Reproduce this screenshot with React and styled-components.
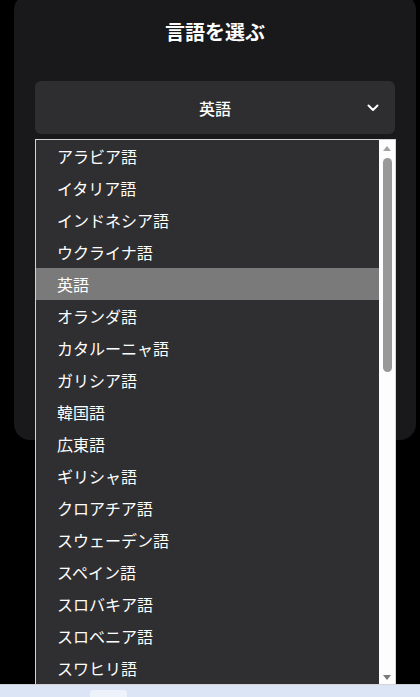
import React from 'react'
import styled, { createGlobalStyle } from 'styled-components'

const GlobalStyle = createGlobalStyle`
    html, body {
        margin: 0;
        padding: 0;
        background: #000;
    }
    body {
        font-family: "Noto Sans CJK JP", "Noto Sans", sans-serif;
        color: #fff;
    }
`

const Screen = styled.div`
    width: 420px;
    height: 697px;
    overflow: hidden;
    display: flex;
    flex-direction: column;
    background: #000;
`

const Panel = styled.div`
    margin: -6px 4px 0 14px;
    height: 446px;
    box-sizing: border-box;
    padding: 24px 21px 0 21px;
    background: #19191b;
    border-radius: 16px;
    display: flex;
    flex-direction: column;
`

const Title = styled.h2`
    margin: 0;
    height: 28px;
    line-height: 28px;
    font-size: 20px;
    font-weight: 700;
    text-align: center;
    color: #fff;
`

const SelectWrap = styled.div`
    position: relative;
    margin-top: 35px;
`

const SelectBox = styled.div`
    height: 53px;
    border-radius: 6px;
    background: #2e2e30;
    display: flex;
    align-items: center;
    justify-content: center;
    position: relative;
    font-size: 16px;
    font-weight: 500;
`

const Chevron = styled.svg`
    position: absolute;
    right: 16px;
    top: 50%;
    margin-top: -4px;
`

const Menu = styled.div`
    position: absolute;
    top: 58px;
    left: 0;
    width: 361px;
    height: 546px;
    box-sizing: border-box;
    border: 1px solid #d4d4d4;
    background: #2f2f31;
    display: grid;
    grid-template-columns: 1fr 16px;
    z-index: 2;
`

const Options = styled.div`
    overflow: hidden;
`

const Option = styled.div`
    height: 32px;
    line-height: 32px;
    padding-left: 21px;
    font-size: 16px;
    color: #fff;
    background: ${props => (props.selected ? '#7a7a7a' : 'transparent')};
    white-space: nowrap;
`

const Track = styled.div`
    background: #fdfdfd;
    display: flex;
    flex-direction: column;
    align-items: center;
    padding-top: 6px;
    box-sizing: border-box;
`

const Arrow = styled.div`
    width: 0;
    height: 0;
    border-left: 4px solid transparent;
    border-right: 4px solid transparent;
    ${props =>
        props.down
            ? 'border-top: 5px solid #7a7a7a; margin-top: auto; margin-bottom: 4px;'
            : 'border-bottom: 5px solid #a3a3a3;'}
`

const Thumb = styled.div`
    width: 9px;
    height: 214px;
    margin-top: 7px;
    border-radius: 5px;
    background: #989898;
`

const Spacer = styled.div`
    flex: 1;
`

const TaskBar = styled.div`
    height: 12px;
    border-top: 1px solid #c9ced8;
    background: #dce5f5;
    display: flex;
    align-items: flex-end;
    padding-left: 90px;
`

const Tab = styled.div`
    width: 37px;
    height: 7px;
    border-radius: 3px 3px 0 0;
    background: #edf2fb;
`

const languages = [
    'アラビア語',
    'イタリア語',
    'インドネシア語',
    'ウクライナ語',
    '英語',
    'オランダ語',
    'カタルーニャ語',
    'ガリシア語',
    '韓国語',
    '広東語',
    'ギリシャ語',
    'クロアチア語',
    'スウェーデン語',
    'スペイン語',
    'スロバキア語',
    'スロベニア語',
    'スワヒリ語',
]

const App = () => (
    <Screen>
        <GlobalStyle />
        <Panel>
            <Title>言語を選ぶ</Title>
            <SelectWrap>
                <SelectBox>
                    英語
                    <Chevron width="12" height="8" viewBox="0 0 12 8">
                        <path d="M1.5 1.5 L6 6 L10.5 1.5" fill="none" stroke="#fff" strokeWidth="2" strokeLinecap="round" strokeLinejoin="round" />
                    </Chevron>
                </SelectBox>
                <Menu>
                    <Options>
                        {languages.map(lang => (
                            <Option key={lang} selected={lang === '英語'}>{lang}</Option>
                        ))}
                    </Options>
                    <Track>
                        <Arrow />
                        <Thumb />
                        <Arrow down />
                    </Track>
                </Menu>
            </SelectWrap>
        </Panel>
        <Spacer />
        <TaskBar>
            <Tab />
        </TaskBar>
    </Screen>
)

export default App
